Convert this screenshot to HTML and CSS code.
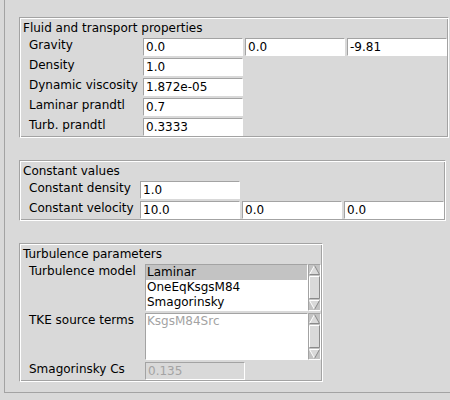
FILE: index.html
```html
<!DOCTYPE html>
<html>
<head>
<meta charset="utf-8">
<link rel="stylesheet" href="styles.css">
</head>
<body>
<div class="frame">
  <section class="group g1">
    <div class="title">Fluid and transport properties</div>
    <div class="grid">
      <span class="lbl">Gravity</span><span class="entry">0.0</span><span class="entry">0.0</span><span class="entry">-9.81</span>
      <span class="lbl">Density</span><span class="entry">1.0</span>
      <span class="lbl">Dynamic viscosity</span><span class="entry">1.872e-05</span>
      <span class="lbl">Laminar prandtl</span><span class="entry">0.7</span>
      <span class="lbl">Turb. prandtl</span><span class="entry">0.3333</span>
    </div>
  </section>
  <section class="group g2">
    <div class="title">Constant values</div>
    <div class="grid">
      <span class="lbl">Constant density</span><span class="entry">1.0</span>
      <span class="lbl">Constant velocity</span><span class="entry">10.0</span><span class="entry">0.0</span><span class="entry">0.0</span>
    </div>
  </section>
  <section class="group g3">
    <div class="title">Turbulence parameters</div>
    <div class="grid">
      <span class="lbl">Turbulence model</span>
      <div class="listwrap">
        <div class="listbox">
          <div class="item sel">Laminar</div>
          <div class="item">OneEqKsgsM84</div>
          <div class="item">Smagorinsky</div>
        </div>
        <svg class="scroll" width="13" height="47" viewBox="0 0 13 47">
          <rect x="0" y="0" width="13" height="47" fill="#c3c3c3"/>
          <path d="M0.5 46.5V0.5H12.5" fill="none" stroke="#a3a3a3"/>
          <path d="M12.5 0.5V46.5H0.5" fill="none" stroke="#ffffff"/>
          <polygon points="6.5,1.5 11.5,10.5 1.5,10.5" fill="#d9d9d9"/>
          <path d="M1.5 10.5L6.5 1.5" fill="none" stroke="#ffffff"/>
          <path d="M6.5 1.5L11.5 10.5H1.5" fill="none" stroke="#8a8a8a"/>
          <rect x="1.5" y="12.5" width="10" height="22" fill="#d9d9d9"/>
          <path d="M1.5 34.5V12.5H11.5" fill="none" stroke="#ffffff"/>
          <path d="M11.5 12.5V34.5H1.5" fill="none" stroke="#8a8a8a"/>
          <polygon points="1.5,36.5 11.5,36.5 6.5,45.5" fill="#d9d9d9"/>
          <path d="M6.5 45.5L1.5 36.5H11.5" fill="none" stroke="#ffffff"/>
          <path d="M11.5 36.5L6.5 45.5" fill="none" stroke="#8a8a8a"/>
        </svg>
      </div>
      <span class="lbl">TKE source terms</span>
      <div class="listwrap">
        <div class="listbox disabled">
          <div class="item">KsgsM84Src</div>
        </div>
        <svg class="scroll" width="13" height="47" viewBox="0 0 13 47">
          <rect x="0" y="0" width="13" height="47" fill="#c3c3c3"/>
          <path d="M0.5 46.5V0.5H12.5" fill="none" stroke="#a3a3a3"/>
          <path d="M12.5 0.5V46.5H0.5" fill="none" stroke="#ffffff"/>
          <polygon points="6.5,1.5 11.5,10.5 1.5,10.5" fill="#d9d9d9"/>
          <path d="M1.5 10.5L6.5 1.5" fill="none" stroke="#ffffff"/>
          <path d="M6.5 1.5L11.5 10.5H1.5" fill="none" stroke="#8a8a8a"/>
          <rect x="1.5" y="12.5" width="10" height="22" fill="#d9d9d9"/>
          <path d="M1.5 34.5V12.5H11.5" fill="none" stroke="#ffffff"/>
          <path d="M11.5 12.5V34.5H1.5" fill="none" stroke="#8a8a8a"/>
          <polygon points="1.5,36.5 11.5,36.5 6.5,45.5" fill="#d9d9d9"/>
          <path d="M6.5 45.5L1.5 36.5H11.5" fill="none" stroke="#ffffff"/>
          <path d="M11.5 36.5L6.5 45.5" fill="none" stroke="#8a8a8a"/>
        </svg>
      </div>
      <span class="lbl">Smagorinsky Cs</span><span class="entry disabled">0.135</span>
    </div>
  </section>
</div>
</body>
</html>
```

FILE: styles.css
```css
* { box-sizing: border-box; }
html, body { margin: 0; padding: 0; }
body {
  background: #d9d9d9;
  font-family: "DejaVu Sans", sans-serif;
  font-size: 12px;
  color: #000;
  width: 450px;
  height: 400px;
  overflow: hidden;
}
.frame {
  margin-left: 4px;
  border-left: 1px solid #a3a3a3;
  border-bottom: 1px solid #a3a3a3;
  padding: 17px 0 10px 14px;
  display: flex;
  flex-direction: column;
  align-items: flex-start;
  gap: 22px;
}
.group {
  border: 1px solid;
  border-color: #a3a3a3 #ffffff #ffffff #a3a3a3;
  box-shadow: inset 1px 1px 0 #ffffff, inset -1px -1px 0 #a3a3a3;
  padding: 3px 1px 1px 3px;
}
.title {
  line-height: 14px;
  margin-bottom: 3px;
  white-space: nowrap;
}
.grid {
  display: grid;
  column-gap: 2px;
  row-gap: 2px;
  margin-left: 6px;
}
.g1 .grid { grid-template-columns: 112px repeat(3, 100px); }
.g2 .grid { grid-template-columns: 109px repeat(3, 100px); }
.g3 .grid { grid-template-columns: 114px 176px; }
.lbl {
  grid-column: 1;
  line-height: 14px;
  white-space: nowrap;
  align-self: start;
}
.entry {
  height: 18px;
  background: #ffffff;
  border: 1px solid;
  border-color: #a3a3a3 #ffffff #ffffff #a3a3a3;
  padding: 0 2px;
  line-height: 16px;
  white-space: nowrap;
  overflow: hidden;
}
.entry.disabled {
  width: 100px;
  background: #d9d9d9;
  color: #a3a3a3;
}
.listwrap {
  display: flex;
  height: 47px;
}
.listbox {
  width: 163px;
  height: 47px;
  background: #ffffff;
  border: 1px solid;
  border-color: #a3a3a3 #ffffff #ffffff #a3a3a3;
}
.item {
  height: 15px;
  line-height: 15px;
  padding-left: 1px;
  white-space: nowrap;
}
.item.sel { background: #c3c3c3; }
.listbox.disabled .item { color: #a3a3a3; }
.scroll { display: block; width: 13px; height: 47px; }
```
